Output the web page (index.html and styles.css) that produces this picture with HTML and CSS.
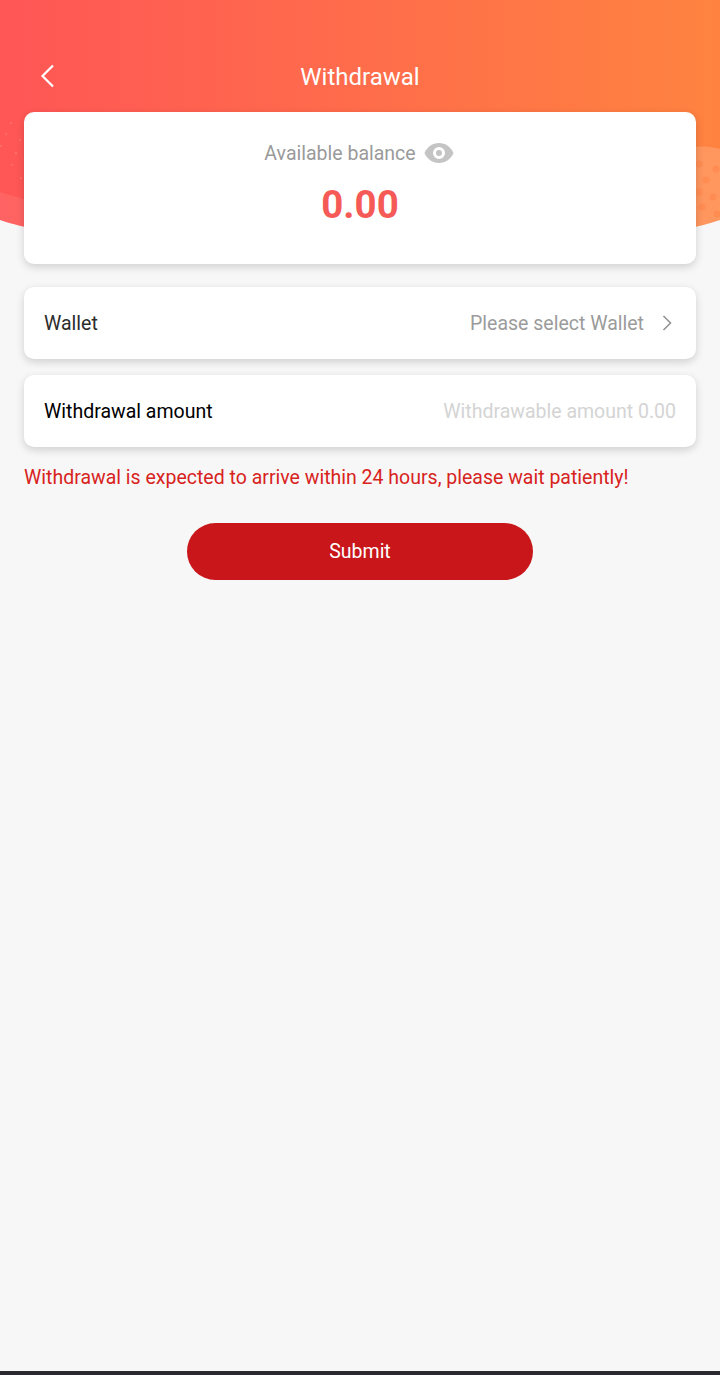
FILE: index.html
```html
<!DOCTYPE html>
<html lang="en">
<head>
<meta charset="utf-8">
<title>Withdrawal</title>
<link rel="stylesheet" href="styles.css">
</head>
<body>
<div class="page">
  <svg class="hero" width="720" height="260" viewBox="0 0 720 260" aria-hidden="true">
    <defs>
      <linearGradient id="heroGrad" x1="0" y1="0" x2="1" y2="0">
        <stop offset="0" stop-color="#ff5656"/>
        <stop offset="1" stop-color="#ff8340"/>
      </linearGradient>
      <clipPath id="heroClip"><path d="M0 220C120 262 600 262 720 220V0H0Z"/></clipPath>
    </defs>
    <g clip-path="url(#heroClip)">
      <rect width="720" height="260" fill="url(#heroGrad)"/>
      <path d="M0 192C40 204 80 215 160 225V260H0Z" fill="#fff" opacity=".08"/>
      <path d="M696 147C704 146 712 147 720 149V240H690Z" fill="#fff" opacity=".16"/>
      <g fill="#ff8a4e" opacity=".7">
        <circle cx="699" cy="164" r="3.5"/><circle cx="706" cy="180" r="3.5"/><circle cx="716" cy="169" r="3.5"/>
        <circle cx="699" cy="192" r="3.5"/><circle cx="713" cy="197" r="3.5"/><circle cx="702" cy="207" r="3.5"/><circle cx="717" cy="214" r="3.5"/>
      </g>
      <g fill="#fff" opacity=".16">
        <circle cx="11" cy="123" r="1"/><circle cx="6" cy="134" r="1"/><circle cx="20" cy="140" r="1"/><circle cx="1" cy="146" r="1"/><circle cx="16" cy="153" r="1"/><circle cx="12" cy="165" r="1"/><circle cx="21" cy="178" r="1"/>
      </g>
    </g>
  </svg>

  <header class="nav">
    <button class="back" type="button" aria-label="Back">
      <svg width="14" height="24" viewBox="0 0 14 24"><path d="M13 1.500 2.500 12 13 22.500" fill="none" stroke="#fff" stroke-width="2.200"/></svg>
    </button>
    <h1 class="title">Withdrawal</h1>
  </header>

  <main class="content">
    <section class="card balance">
      <div class="balance-label">
        <span>Available balance</span>
        <svg width="30" height="20" viewBox="0 0 30 20" aria-hidden="true"><path fill-rule="evenodd" fill="#c4c4c4" d="M15 0C8.500 0 3 4 .5 10 3 16 8.500 20 15 20s12-4 14.500-10C27 4 21.500 0 15 0Zm0 16a6 6 0 1 1 0-12 6 6 0 0 1 0 12Zm0-3a3 3 0 1 0 0-6 3 3 0 0 0 0 6Z"/></svg>
      </div>
      <div class="balance-value">0.00</div>
    </section>

    <div class="card row row-wallet">
      <span class="row-label">Wallet</span>
      <span class="row-side">
        <span class="row-hint">Please select Wallet</span>
        <svg width="10" height="16" viewBox="0 0 10 16" aria-hidden="true"><path d="M1.500 1 8.500 8 1.500 15" fill="none" stroke="#8f8f8f" stroke-width="1.500"/></svg>
      </span>
    </div>

    <div class="card row row-amount">
      <span class="row-label row-label-strong">Withdrawal amount</span>
      <span class="row-placeholder">Withdrawable amount 0.00</span>
    </div>

    <p class="notice">Withdrawal is expected to arrive within 24 hours, please wait patiently!</p>

    <button class="submit" type="button">Submit</button>
  </main>

  <div class="bottom-bar"></div>
</div>
</body>
</html>
```

FILE: styles.css
```css
* { box-sizing: border-box; }
html, body { margin: 0; padding: 0; }
body { background: #f7f7f7; font-family: Roboto, "Liberation Sans", sans-serif; }

.page {
  position: relative;
  width: 720px;
  height: 1375px;
  display: flex;
  flex-direction: column;
  overflow: hidden;
}
.hero { position: absolute; top: 0; left: 0; display: block; }

.nav {
  position: relative;
  height: 112px;
  padding-top: 53px;
  flex: none;
}
.title {
  margin: 0;
  height: 48px;
  line-height: 48px;
  text-align: center;
  color: #fff;
  font-size: 24px;
  font-weight: 400;
}
.back {
  position: absolute;
  left: 40px;
  top: 64px;
  width: 14px;
  height: 24px;
  padding: 0;
  border: 0;
  background: none;
  display: flex;
}

.content {
  position: relative;
  flex: 1;
  display: flex;
  flex-direction: column;
  padding: 0 24px;
}
.card {
  background: #fff;
  border-radius: 10px;
  box-shadow: 0 3px 8px rgba(0, 0, 0, .16);
}
.balance {
  height: 152px;
  padding-top: 27px;
  display: flex;
  flex-direction: column;
  align-items: center;
}
.balance-label {
  display: flex;
  align-items: center;
  gap: 8px;
  height: 28px;
  padding-right: 2px;
  color: #9a9a9a;
  font-size: 19.5px;
}
.balance-value {
  margin-top: 15px;
  color: #f55a57;
  font-size: 38.5px;
  line-height: 46px;
  font-weight: 700;
}

.row {
  height: 72px;
  padding: 0 20px;
  display: flex;
  align-items: center;
  justify-content: space-between;
  font-size: 19.5px;
}
.row-wallet { margin-top: 23px; }
.row-amount { margin-top: 16px; }
.row-label { color: #2c2c2c; }
.row-label-strong { color: #000; }
.row-side { display: flex; align-items: center; gap: 18px; padding-right: 4px; }
.row-hint { color: #9b9b9b; }
.row-placeholder { color: #d4d4d4; }

.notice {
  margin: 17px 0 0;
  color: #d8231d;
  font-size: 19.5px;
  line-height: 28px;
}
.submit {
  align-self: center;
  width: 346px;
  height: 57px;
  margin-top: 31px;
  border: 0;
  border-radius: 29px;
  background: #c8161b;
  color: #fff;
  font-family: inherit;
  font-size: 19.5px;
}

.bottom-bar {
  position: absolute;
  left: 0;
  right: 0;
  bottom: 0;
  height: 4px;
  background: #2b2a30;
}
```
